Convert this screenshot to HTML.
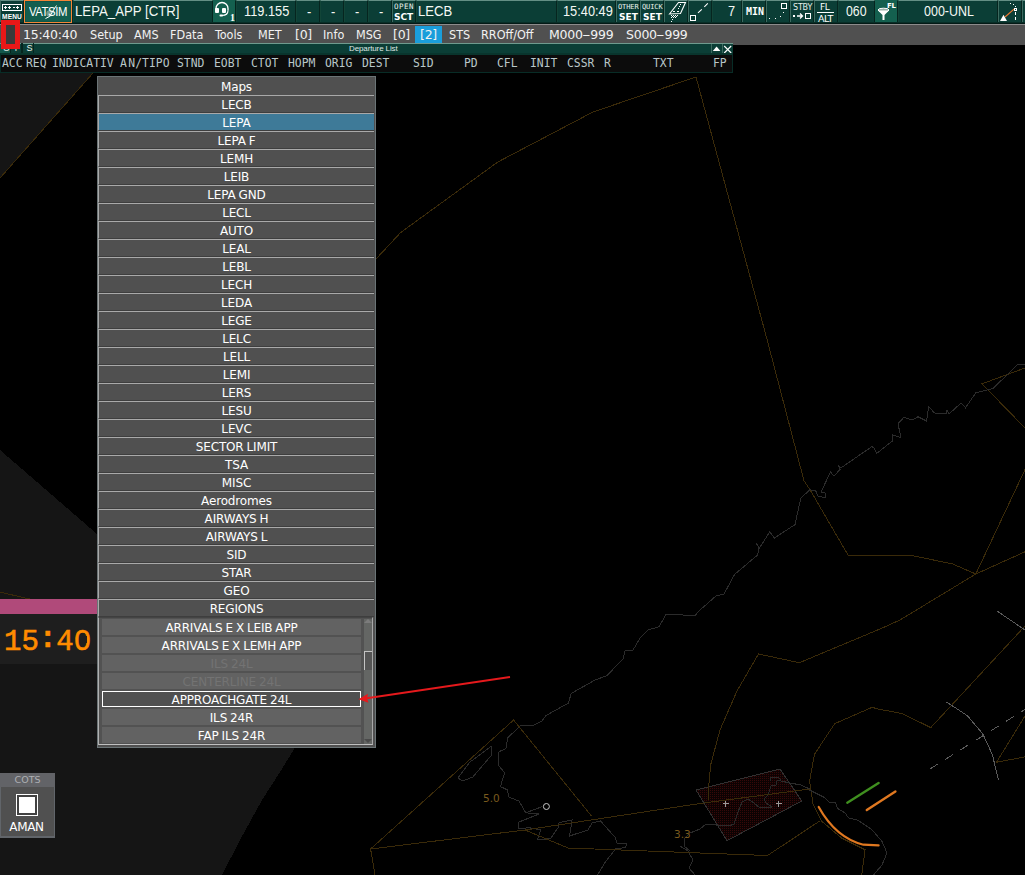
<!DOCTYPE html>
<html lang="en">
<head>
<meta charset="utf-8">
<title>LEPA_APP radar</title>
<style>
*{box-sizing:border-box;margin:0;padding:0}
html,body{width:1025px;height:875px;overflow:hidden;background:#000}
body{position:relative;font-family:"DejaVu Sans","Liberation Sans",sans-serif;color:#fff}
.abs{position:absolute}
#map{position:absolute;left:0;top:0;width:1025px;height:875px}

/* ---------- top bar ---------- */
#topbar{position:absolute;left:0;top:0;width:1025px;height:24px;background:#082e27;border-bottom:1px solid #031a15}
.cell{position:absolute;top:0;height:22px;background:#0b3e36;border-top:1px solid #648f85;border-left:1px solid #124538;border-right:1px solid #06251f;overflow:hidden;white-space:nowrap}
.cell.btn{border-left-color:#3d6b60}
.cell.hl{background:#14604f;border-top-color:#14604f;border-left-color:#14604f}
.arial{font-family:"Liberation Sans",sans-serif;font-size:15.500px;line-height:22px;color:#f4f8f4;display:inline-block;transform:scaleX(.825);transform-origin:0 50%;white-space:nowrap;position:absolute;top:-1px}
.tiny{position:absolute;font-family:"DejaVu Sans Mono","Liberation Mono",monospace;font-size:8px;line-height:8px;color:#e8f0ec;white-space:nowrap;letter-spacing:0}
.tinyb{position:absolute;font-family:"DejaVu Sans","Liberation Sans",sans-serif;font-weight:bold;font-size:10px;line-height:10px;color:#fff;white-space:nowrap}

/* ---------- menu bar ---------- */
#menubar{position:absolute;left:0;top:24px;width:1025px;height:21px;background:#505050;border-top:1px solid #8c8c8c}
#menubar span{position:absolute;top:0;font-size:12.500px;letter-spacing:-.25px;line-height:19px;color:#f2f2f2;white-space:nowrap}

/* ---------- departure list ---------- */
#deptitle{position:absolute;left:0;top:43px;width:733px;height:10px;background:#0b3e36;border-top:1px solid #6f9a8e}
#dephead{position:absolute;left:0;top:53px;width:733px;height:20px;background:#0c0c0c;border:1px solid #082c26;border-top:2px solid #09352d}
#dephead span{position:absolute;top:1px;font-family:"DejaVu Sans Mono","Liberation Mono",monospace;font-size:11.400px;line-height:14px;color:#b9c7c9;white-space:nowrap}

/* ---------- popup ---------- */
#popup{position:absolute;left:97px;top:76px;width:279px;height:671px;background:#505050;border:1px solid #6b7476}
.row{position:absolute;left:0;width:276px;height:18px;border-top:1px solid #a9a9a9;border-left:1px solid #a9a9a9;border-bottom:1px solid #3e3e3e;background:#505050;text-align:center;font-size:12px;line-height:18px;color:#fff;white-space:nowrap;word-spacing:-.7px;letter-spacing:-.15px}
.row.title{border-color:#505050}
.row.sel{background:#3e7a98}
.sub{position:absolute;left:5px;width:259px;height:16px;background:#626262;text-align:center;font-size:12px;line-height:18px;word-spacing:-.7px;letter-spacing:-.15px;color:#fff;white-space:nowrap}
.sub.dim{color:#737373}
.sub.cur{background:#505050;border:1px solid #fff;line-height:16px;left:4px;width:260px;height:17px}

#popup{height:672px}
.subframe{position:absolute;left:0;top:540px;width:275px;height:128px;border-left:1px solid #b0b0b0;border-top:1px solid #444;border-right:1px solid #a8a8a8;border-bottom:1px solid #c0c0c0;background:#525252}
.sub{left:4px;width:259px}
.sub.cur{left:4px;width:259px;height:16px}
.sbar{position:absolute;left:266px;top:542px;width:8px;height:125px;background:#646664}
.sthumb{position:absolute;left:266px;top:574px;width:8px;height:19px;background:#555;border-left:1px solid #c4c4c4;border-top:1px solid #c4c4c4}
.sup{position:absolute;left:266px;top:542px;width:0;height:0;border-left:4px solid transparent;border-right:4px solid transparent;border-bottom:4px solid #7c7c7c}
.sdn{position:absolute;left:266px;top:662px;width:0;height:0;border-left:4px solid transparent;border-right:4px solid transparent;border-top:4px solid #4a4a4a}
#menubar span i{font-style:normal;display:inline-block;transform:scaleX(1.9);margin:0 1.700px}
#menubar span.c{font-family:"DejaVu Sans Condensed","DejaVu Sans",sans-serif;font-stretch:condensed;letter-spacing:0}
</style>
</head>
<body>
<svg id="map" viewBox="0 0 1025 875" shape-rendering="crispEdges">
<polygon points="0,73 93,73 0,178" fill="#151515"/>
<polygon points="0,450 97,534 200,640 296,746 280,772 262,800 240,840 222,875 0,875" fill="#151515"/>
<defs><pattern id="dots" width="2" height="2" patternUnits="userSpaceOnUse"><rect width="2" height="2" fill="#0c0202"/><rect width="1" height="1" fill="#360808"/></pattern></defs>
<polygon points="696,790 780,769 801.8,801 727,840.700" fill="url(#dots)" stroke="#303030"/>
<polyline points="93,73 0,178" fill="none" stroke="#3a2a09" stroke-width="1" />
<polyline points="0,592 27,598.5 60,604" fill="none" stroke="#3a2a09" stroke-width="1" />
<polyline points="376,259 400.7,232.5 497.8,162 593,112 696,77 767.2,340 804,480.8 810.4,490.4 848,555 909.5,555 952.7,564 975.8,574" fill="none" stroke="#3a2a09" stroke-width="1" />
<polyline points="1025,469.6 975.8,574" fill="none" stroke="#3a2a09" stroke-width="1" />
<polyline points="1025,551.8 975.8,574 900,620 880,629 799.4,662.7 758.5,654 737,691 720,730 710.6,765 708.7,787 709,800" fill="none" stroke="#3a2a09" stroke-width="1" />
<polyline points="1025,368 982,383.8 1025,428" fill="none" stroke="#3a2a09" stroke-width="1" />
<polyline points="1025,364 1018,364 1007,375 992.7,388.6 975.8,392.8 965.5,407.8 961,403 949,414 947,409.7 946,413.6 934.5,413 928.7,406.5 926.5,421 918,416.8 911.8,420 903.8,417.4 898,423.8 901,437.6 892.6,435 892.6,440.8 876.6,453.6 874,448 872,446.5 840.8,468 838,464.8 840,469.5 834,476 830.5,472 821,492 825.4,493 825.4,497.7 817.7,496 815.8,491 810,489.7 800.8,498 795,524.6 774.5,538 769.7,532 759.5,548 756,543 759,547 757.6,555 734.5,574.5 724,594 716,596 700,610 695,615.5 666,614.3 659,626.8 648,630 640.4,637.4 632.6,650.8 625.4,650 623,659 606.7,675.8 595,680 571,693.6 568.6,703 546,715.5 542,721 534,725 520,725.8 507.7,738 506,748.5 499,751.7 498,765 504.6,772.6 500.5,786.6 507.6,790 508.6,797 519,801 525.8,812.8 541.8,806.8" fill="none" stroke="#2b2b2b" stroke-width="1" />
<polyline points="525.8,812.8 539,814 519,822 518.5,828.7 529,827.7 540.8,830 537.4,840 550.7,838.6 558,827.7 559,822.7 572,820 569.6,836 575.6,834 588,830 592,823 600.5,821 615.4,837.6 617,843 627,844 625,847.6 615.4,849 605,862.5 599,872.5 597,875" fill="none" stroke="#2b2b2b" stroke-width="1" />
<polyline points="770,781 771,777 779,778 781,780 777,781 776,785 771,786 768,795 764,799 766,803 772,807 760,808 754,803 748,799 742,802 738,812 734,824 729,826 716,825 706,824 700,829 690,833 684,839 684,846 690,851" fill="none" stroke="#292929"/>
<polyline points="680,846 688,851 693,860 689,868 695,875" fill="none" stroke="#2b2b2b"/>
<polyline points="809.600,789 801,785 790,783 781,781" fill="none" stroke="#2b2b2b"/>
<circle cx="546.4" cy="806.5" r="3" fill="none" stroke="#c8c8c8" stroke-width="1" shape-rendering="auto"/>
<polygon points="458,778 470,762 491,746.4 492,754.7 472.8,777 462.8,781" fill="none" stroke="#2b2b2b"/>
<polyline points="591.5,816 513.6,720 370.6,849 375,875" fill="none" stroke="#3a2a09" stroke-width="1" />
<polyline points="370.6,849 525,830 700,803.5 809.6,789" fill="none" stroke="#3a2a09" stroke-width="1" />
<polyline points="525,830 568,848 700,853 767.5,855.5 819.7,821" fill="none" stroke="#3a2a09" stroke-width="1" />
<polyline points="1025,626 930.8,727.6 902,713.5 880,709.4 872,707.4 834.8,723.6 814.6,754 809.6,780.8 813,804 821.4,821 841.6,838 865,849.8 861.8,875" fill="none" stroke="#3a2a09" stroke-width="1" />
<polyline points="1025,756.8 996.5,762.3 1025,716" fill="none" stroke="#3a2a09" stroke-width="1" />
<polyline points="946.6,702 967.7,716 982.8,734 992.4,754.6 998.4,780" fill="none" stroke="#5a5a5a" stroke-width="1" />
<polyline points="996.5,610.7 1025,630" fill="none" stroke="#5a5a5a" stroke-width="1" />
<polyline points="930,769 1025,709.4" fill="none" stroke="#5c5c5c" stroke-width="1" stroke-dasharray="9 9"/>
<polyline points="809.6,790 824.7,797.6 829.8,802.7 835.5,802.7 837.5,808.4 845,812.8 848.3,817.8 858.4,820.5 871.9,829.6 882,841.4 887,853 882,865 873.5,875" fill="none" stroke="#2b2b2b" stroke-width="1" />
<path d="M722.500 803.500h6M725.500 800.500v6M775.500 803.500h6M778.500 800.500v6" stroke="#9a9a9a" fill="none"/>
<polyline points="847.3,802.7 878.6,783" fill="none" stroke="#3f8f1f" stroke-width="2.4" shape-rendering="auto" stroke-linecap="round" />
<polyline points="866.8,810 895.4,791.5" fill="none" stroke="#e07820" stroke-width="2.4" shape-rendering="auto" stroke-linecap="round" />
<path d="M818.700 807 Q836 838 863.400 844.700 L878.600 845.400" fill="none" stroke="#e07820" stroke-width="2.2" shape-rendering="auto" stroke-linecap="round"/>
<text x="483" y="802" font-family="DejaVu Sans, sans-serif" font-size="10.5" fill="#7a5a1e">5.0</text>
<text x="674" y="838" font-family="DejaVu Sans, sans-serif" font-size="10.5" fill="#7a5a1e">3.3</text>
</svg>

<div id="topbar">
<div class="cell btn" style="left:0px;width:24px"><svg class="abs" style="left:1px;top:3px" width="20" height="8" viewBox="0 0 20 8"><rect x="0.5" y="0.5" width="19" height="6" fill="none" stroke="#fff"/><path d="M2 3.5h3M3.500 2v3M6 3.5h3M7.500 2v3M10.500 3.5h2.500M14 3.5h3M15.500 2v3" stroke="#fff" stroke-width="1" fill="none" shape-rendering="crispEdges"/></svg><span class="tinyb" style="left:1px;top:11px;font-family:'Liberation Sans',sans-serif;font-size:8px;line-height:9px;letter-spacing:.2px;transform:scaleX(.82);transform-origin:0 50%">MENU</span></div>
<div class="abs" style="left:24px;top:0;width:48px;height:23px;border:1px solid #f58536;background:#135e4f;box-shadow:inset 0 0 0 1px #0f5648"><svg class="abs" style="left:0;top:0" width="46" height="22" viewBox="0 0 46 22"><circle cx="24.500" cy="12.500" r="3.200" fill="#6f9c8e"/><path d="M20.500 17.500L24.500 15.500L29.500 7.500L31.500 4.500" fill="none" stroke="#fff" stroke-width="1"/></svg><span class="abs" style="left:4px;top:3px;font-family:'Liberation Sans',sans-serif;font-size:13px;line-height:16px;color:#fff;letter-spacing:-.5px;white-space:nowrap;transform:scaleX(.875);transform-origin:0 50%">VATSIM</span></div>
<div class="cell " style="left:73px;width:140px"><span class="arial" style="left:.5px;transform:scaleX(.852)">LEPA_APP [CTR]</span></div>
<div class="cell hl" style="left:213px;width:23px"><svg class="abs" style="left:-1px;top:-1px" width="22" height="22" viewBox="0 0 22 22"><path d="M3 10V8.500a6 6 0 0 1 12 0v2" fill="none" stroke="#fff" stroke-width="1.300"/><rect x="2" y="8" width="4" height="5" rx="1" fill="#fff"/><rect x="9" y="8" width="4" height="5" rx="1" fill="#fff"/><path d="M15 10.500c0 3.500-3 5-6 5" fill="none" stroke="#fff" stroke-width="1.100"/><rect x="6.500" y="14.500" width="3.500" height="2" rx=".8" fill="#fff"/></svg><span class="abs" style="left:16px;top:12px;font-family:'Liberation Serif',serif;font-weight:bold;font-size:10px;line-height:10px;color:#fff">1</span></div>
<div class="cell " style="left:236px;width:60px"><span class="arial" style="left:7px;">119.155</span></div>
<div class="cell " style="left:296px;width:24px"><span class="arial" style="left:10px;top:0">-</span></div>
<div class="cell " style="left:320px;width:24px"><span class="arial" style="left:10px;top:0">-</span></div>
<div class="cell " style="left:344px;width:24px"><span class="arial" style="left:10px;top:0">-</span></div>
<div class="cell " style="left:368px;width:24px"><span class="arial" style="left:10px;top:0">-</span></div>
<div class="cell btn" style="left:392px;width:24px"><span class="tiny" style="left:1px;top:2px;font-size:7.500px;letter-spacing:.5px">OPEN</span><span class="tinyb" style="left:1px;top:12px;font-size:9px;line-height:9px">SCT</span></div>
<div class="cell " style="left:416px;width:141px"><span class="arial" style="left:.5px;transform:scaleX(.845)">LECB</span></div>
<div class="cell " style="left:557px;width:59px"><span class="arial" style="left:5px;">15:40:49</span></div>
<div class="cell btn" style="left:616px;width:24px"><span class="tiny" style="left:1px;top:2px;font-size:7px;letter-spacing:-.1px">OTHER</span><span class="tinyb" style="left:2px;top:12px;font-size:9px;line-height:9px">SET</span></div>
<div class="cell btn" style="left:640px;width:24px"><span class="tiny" style="left:1px;top:2px;font-size:7px;letter-spacing:-.1px">QUICK</span><span class="tinyb" style="left:2px;top:12px;font-size:9px;line-height:9px">SET</span></div>
<div class="cell btn" style="left:664px;width:24px"><svg class="abs" style="left:0;top:-1px" width="23" height="22" viewBox="0 0 23 22"><path d="M4.500 14L13.500 2.500H20.500L15.500 13.500Z" fill="none" stroke="#fff" stroke-width="1.100"/><rect x="15" y="4" width="1" height="1" fill="#fff"/><rect x="14" y="6" width="1" height="1" fill="#fff"/><rect x="13" y="8" width="1" height="1" fill="#fff"/><rect x="12" y="11" width="2" height="1" fill="#fff"/><rect x="8" y="11" width="2" height="1" fill="#fff"/><rect x="6" y="15" width="1" height="1" fill="#fff"/><rect x="8" y="15" width="1" height="1" fill="#fff"/><rect x="10" y="15" width="1" height="1" fill="#fff"/><rect x="12" y="15" width="1" height="1" fill="#fff"/><rect x="7" y="16" width="1" height="1" fill="#fff"/><rect x="9" y="16" width="1" height="1" fill="#fff"/><rect x="11" y="16" width="1" height="1" fill="#fff"/><rect x="6" y="17" width="1" height="1" fill="#fff"/><rect x="8" y="17" width="1" height="1" fill="#fff"/><rect x="10" y="17" width="1" height="1" fill="#fff"/><rect x="7" y="19" width="1" height="1" fill="#fff"/><rect x="6" y="21" width="1" height="1" fill="#fff"/></svg></div>
<div class="cell btn" style="left:688px;width:24px"><svg class="abs" style="left:0;top:-1px" width="23" height="22" viewBox="0 0 23 22"><rect x="1.500" y="15.500" width="5" height="5" fill="none" stroke="#fff"/><path d="M9 12.800L12.800 9.300M15.300 6.800L18.800 3.300" stroke="#fff" stroke-width="1.100"/></svg></div>
<div class="cell " style="left:712px;width:30px"><span class="arial" style="left:15px;">7</span></div>
<div class="cell btn" style="left:742px;width:24px"><span class="abs" style="left:3px;top:6px;font-family:'DejaVu Sans Mono',monospace;font-weight:bold;font-size:10px;line-height:10px;color:#fff">MIN</span></div>
<div class="cell btn" style="left:766px;width:24px"><svg class="abs" style="left:0;top:0" width="23" height="22" viewBox="0 0 23 22"><rect x="14.500" y="2.500" width="5" height="5" fill="none" stroke="#fff"/><rect x="16" y="11" width="1" height="1" fill="#fff"/><rect x="13" y="15" width="1" height="1" fill="#fff"/><rect x="8" y="17" width="1" height="1" fill="#fff"/><rect x="2" y="17" width="1" height="1" fill="#fff"/></svg></div>
<div class="cell btn" style="left:790px;width:24px"><span class="tiny" style="left:2px;top:3px;font-family:'DejaVu Sans',sans-serif;letter-spacing:-.2px">STBY</span><svg class="abs" style="left:0;top:10px" width="23" height="10" viewBox="0 0 23 10"><rect x="2" y="4" width="2" height="2" fill="#fff"/><path d="M6 5h5.500M9 2.500L11.500 5L9 7.500" fill="none" stroke="#fff" stroke-width="1.300"/><rect x="14.500" y="2.500" width="5" height="5" fill="none" stroke="#fff"/></svg></div>
<div class="cell btn" style="left:814px;width:24px"><span class="abs" style="left:5px;top:2px;font-family:'DejaVu Sans',sans-serif;font-size:9px;line-height:9px;color:#fff;letter-spacing:-.4px">FL</span><div class="abs" style="left:2px;top:11px;width:17px;height:1px;background:#fff"></div><span class="abs" style="left:3px;top:13px;font-family:'DejaVu Sans',sans-serif;font-size:9.500px;line-height:9px;color:#fff;letter-spacing:-.5px">ALT</span></div>
<div class="cell " style="left:838px;width:37px"><span class="arial" style="left:6.500px;transform:scaleX(.795)">060</span></div>
<div class="cell hl" style="left:875px;width:23px"><svg class="abs" style="left:0;top:0" width="22" height="22" viewBox="0 0 22 22"><ellipse cx="7.500" cy="9" rx="5.500" ry="1.800" fill="#9ab0a8" stroke="#fff" stroke-width="1"/><path d="M2 9.500L6.500 14V19H8.500V14L13 9.500Z" fill="#fff"/></svg><span class="abs" style="left:11px;top:1px;font-family:'DejaVu Sans',sans-serif;font-weight:bold;font-size:7px;line-height:8px;color:#fff;letter-spacing:-.2px">FL</span></div>
<div class="cell " style="left:898px;width:100px"><span class="arial" style="left:25px;transform:scaleX(.805)">000-UNL</span></div>
<div class="cell btn" style="left:998px;width:24px"><svg class="abs" style="left:0;top:0" width="23" height="22" viewBox="0 0 23 22"><path d="M1 20L4.500 13.800L8 20Z" fill="#fff"/><path d="M6 16L15 8.200" stroke="#f07830" stroke-width="1.100"/><rect x="15" y="7" width="3" height="3" fill="#fff"/><rect x="16" y="8" width="1" height="1" fill="#0b3e36"/><rect x="16" y="11" width="1" height="3" fill="#fff"/><rect x="16" y="16" width="1" height="3" fill="#fff"/><rect x="11" y="2" width="1" height="1" fill="#fff"/><rect x="14" y="3" width="1" height="1" fill="#fff"/><rect x="16" y="5" width="1" height="1" fill="#fff"/></svg></div>
<div class="cell btn" style="left:1022px;width:8px"></div>
</div>
<div id="menubar">
<span style="left:23px">15:40:40</span>
<span class="c" style="left:90px">Setup</span>
<span class="c" style="left:134px">AMS</span>
<span class="c" style="left:170px">FData</span>
<span class="c" style="left:215px">Tools</span>
<span class="c" style="left:258px">MET</span>
<span style="left:295px">[0]</span>
<span class="c" style="left:323px">Info</span>
<span class="c" style="left:356px">MSG</span>
<span style="left:393px">[0]</span>
<span class="c" style="left:449px">STS</span>
<span class="c" style="left:481px">RROff/Off</span>
<span style="left:549px">M000<i>-</i>999</span>
<span style="left:626px">S000<i>-</i>999</span>
<span style="left:415px;width:27px;top:1px;height:17px;line-height:17px;background:#1a9edb;text-align:center">[2]</span>

</div>
<div id="deptitle"><span class="abs" style="left:349px;top:0;font-family:'Liberation Sans',sans-serif;font-size:8px;line-height:10px;letter-spacing:-.12px;color:#dfe8e4;white-space:nowrap">Departure List</span><div class="abs" style="left:0;top:0;width:10px;height:9px;background:#14584b"></div><span class="abs" style="left:3px;top:-1px;font-family:'Liberation Sans',sans-serif;font-size:9.500px;line-height:10px;color:#dfe8e4">U</span><span class="abs" style="left:13px;top:-1px;font-family:'Liberation Sans',sans-serif;font-size:9.500px;line-height:10px;color:#dfe8e4">T</span><span class="abs" style="left:26.500px;top:-1px;font-family:'Liberation Sans',sans-serif;font-size:9px;line-height:10px;color:#eef4f0">S</span><div class="abs" style="left:10px;top:-1px;width:1px;height:10px;background:#06251f"></div><div class="abs" style="left:21px;top:-1px;width:2px;height:10px;background:#06251f"></div><div class="abs" style="left:33px;top:-1px;width:1px;height:10px;background:#06251f"></div><div class="abs" style="left:711px;top:0;width:11px;height:10px;border-left:1px solid #3d6b61"></div><div class="abs" style="left:722px;top:0;width:11px;height:10px;border-left:1px solid #3d6b61"></div><svg class="abs" style="left:711px;top:0" width="22" height="10" viewBox="0 0 22 10"><path d="M1.800 7L5.600 2.600L9.400 7Z" fill="#fff"/><path d="M13.200 2l7 7M20.200 2l-7 7" stroke="#fff" stroke-width="1.100"/></svg></div>
<div id="dephead"><span style="left:1px">ACC</span><span style="left:25px">REQ</span><span style="left:51px">INDICATIV</span><span style="left:119px">A<span style="position:static;margin-left:1.500px">N/TIPO</span></span><span style="left:176px">STND</span><span style="left:213px">EOBT</span><span style="left:250px">CTOT</span><span style="left:287px">HOPM</span><span style="left:324px">ORIG</span><span style="left:361px">DEST</span><span style="left:412px">SID</span><span style="left:463px">PD</span><span style="left:496px">CFL</span><span style="left:529px">INIT</span><span style="left:566px">CSSR</span><span style="left:603px">R</span><span style="left:652px">TXT</span><span style="left:712px">FP</span></div>


<div class="abs" style="left:0;top:599px;width:97px;height:15px;background:#b04a7a"></div>
<div class="abs" style="left:0;top:614px;width:97px;height:50px;background:#1e1e1e"></div>
<span class="abs" style="left:4px;top:625px;font-family:'Liberation Mono',monospace;font-size:28.500px;line-height:36px;color:#ff8c00;white-space:nowrap;-webkit-text-stroke:.6px #ff8c00;transform:scale(1.02,1.03);transform-origin:0 50%">15<b style="position:relative;top:-3px;font-weight:bold">:</b>40</span>
<div class="abs" style="left:80px;top:636px;width:7px;height:7px;background:#1e1e1e"></div>
<div class="abs" style="left:0;top:773px;width:55px;height:65px;background:#505050;border:1px solid #61656a;border-bottom-width:2px"></div>
<div class="abs" style="left:0;top:773px;width:55px;height:14px;background:#626367;text-align:center;font-size:9.500px;line-height:13px;color:#aeb0b4">COTS</div>
<div class="abs" style="left:16px;top:794px;width:22px;height:22px;border:1px solid #fff;background:#424242"></div>
<div class="abs" style="left:19px;top:797px;width:16px;height:16px;background:#fff"></div>
<div class="abs" style="left:0;top:819px;width:53px;text-align:center;font-size:12px;line-height:16px;letter-spacing:-.3px;color:#fff">AMAN</div>
<div id="popup">
<div class="row title" style="top:0px">Maps</div>
<div class="row" style="top:18px">LECB</div>
<div class="row sel" style="top:36px">LEPA</div>
<div class="row" style="top:54px">LEPA F</div>
<div class="row" style="top:72px">LEMH</div>
<div class="row" style="top:90px">LEIB</div>
<div class="row" style="top:108px">LEPA GND</div>
<div class="row" style="top:126px">LECL</div>
<div class="row" style="top:144px">AUTO</div>
<div class="row" style="top:162px">LEAL</div>
<div class="row" style="top:180px">LEBL</div>
<div class="row" style="top:198px">LECH</div>
<div class="row" style="top:216px">LEDA</div>
<div class="row" style="top:234px">LEGE</div>
<div class="row" style="top:252px">LELC</div>
<div class="row" style="top:270px">LELL</div>
<div class="row" style="top:288px">LEMI</div>
<div class="row" style="top:306px">LERS</div>
<div class="row" style="top:324px">LESU</div>
<div class="row" style="top:342px">LEVC</div>
<div class="row" style="top:360px">SECTOR LIMIT</div>
<div class="row" style="top:378px">TSA</div>
<div class="row" style="top:396px">MISC</div>
<div class="row" style="top:414px">Aerodromes</div>
<div class="row" style="top:432px">AIRWAYS H</div>
<div class="row" style="top:450px">AIRWAYS L</div>
<div class="row" style="top:468px">SID</div>
<div class="row" style="top:486px">STAR</div>
<div class="row" style="top:504px">GEO</div>
<div class="row" style="top:522px">REGIONS</div>
<div class="subframe"></div>
<div class="sub " style="top:542px">ARRIVALS E X LEIB APP</div>
<div class="sub " style="top:560px">ARRIVALS E X LEMH APP</div>
<div class="sub dim" style="top:578px">ILS 24L</div>
<div class="sub dim" style="top:596px">CENTERLINE 24L</div>
<div class="sub cur" style="top:614px">APPROACHGATE 24L</div>
<div class="sub " style="top:632px">ILS 24R</div>
<div class="sub " style="top:650px">FAP ILS 24R</div>
<div class="sbar"></div><div class="sthumb"></div><div class="sup"></div><div class="sdn"></div>
</div>
<div class="abs" style="left:1px;top:20px;width:19px;height:28.500px;border:5px solid #e81818;background:#3a3a3a"></div>
<svg class="abs" style="left:0;top:0" width="1025" height="875" viewBox="0 0 1025 875"><path d="M510 677L365 698.500" stroke="#e5191c" stroke-width="2" fill="none"/><path d="M358.400 699.300L368 693.800L367 698.300L368.500 702.800Z" fill="#e5191c"/></svg>
</body>
</html>
